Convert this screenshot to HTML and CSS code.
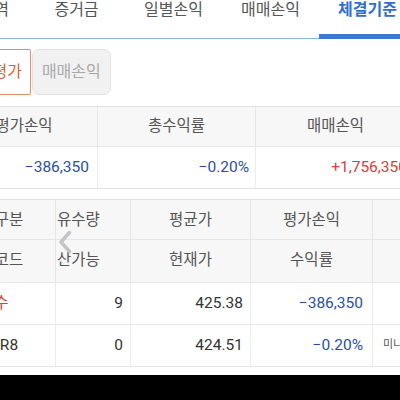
FILE: index.html
```html
<!DOCTYPE html>
<html lang="ko">
<head>
	<meta charset="UTF-8">
	<title>체결기준</title>
	<link rel="stylesheet" href="styles.css">
</head>
<body>
	<div class="tabs">
		<div class="tab">거래내역</div>
		<div class="tab">증거금</div>
		<div class="tab">일별손익</div>
		<div class="tab">매매손익</div>
		<div class="tab active">체결기준</div>
	</div>

	<div class="toggle">
		<div class="btn on">잔고평가</div>
		<div class="btn">매매손익</div>
	</div>

	<div class="sum">
		<div class="th">평가손익</div>
		<div class="th">총수익률</div>
		<div class="th">매매손익</div>
		<div class="td blue">&minus;386,350</div>
		<div class="td blue">&minus;0.20%</div>
		<div class="td red">+1,756,350</div>
	</div>

	<div class="detail">
		<div class="th">구분</div>
		<div class="th left">유수량</div>
		<div class="th">평균가</div>
		<div class="th">평가손익</div>
		<div class="th"></div>

		<div class="th">코드</div>
		<div class="th left">산가능</div>
		<div class="th">현재가</div>
		<div class="th">수익률</div>
		<div class="th"></div>

		<div class="td first red">매수</div>
		<div class="td">9</div>
		<div class="td">425.38</div>
		<div class="td blue">&minus;386,350</div>
		<div class="td"></div>

		<div class="td first">AKR8</div>
		<div class="td">0</div>
		<div class="td">424.51</div>
		<div class="td blue">&minus;0.20%</div>
		<div class="td small">미니</div>

		<svg class="chev" width="14" height="24" viewBox="0 0 14 24">
			<polyline points="11.5,2.5 3,12 11.5,21.5" fill="none" stroke="#c4c4c4" stroke-width="3.5" stroke-linecap="round" stroke-linejoin="round"/>
		</svg>
	</div>

	<div class="navbar"></div>
</body>
</html>
```

FILE: styles.css
```css
* {
	box-sizing: border-box;
}
html, body {
	margin: 0;
	padding: 0;
}
body {
	width: 400px;
	height: 400px;
	overflow: hidden;
	background: #fff;
	font-family: "Roboto", "Noto Sans CJK KR", sans-serif;
	color: #333;
}

/* tabs */
.tabs {
	display: flex;
	align-items: flex-start;
	margin-left: -69px;
	height: 39px;
	border-bottom: 1px solid #8fb4e2;
}
.tab {
	flex: 0 0 97px;
	height: 38px;
	text-align: center;
	font-size: 16px;
	line-height: 20px;
	color: #555;
	white-space: nowrap;
}
.tab.active {
	height: 39px;
	color: #2f6fcc;
	font-weight: bold;
	border-bottom: 5px solid #3b78d1;
}

/* toggle */
.toggle {
	display: flex;
	gap: 1px;
	margin: 10px 0 0 -46px;
	height: 46px;
}
.btn {
	padding: 0 9px;
	font-size: 16px;
	line-height: 44px;
	border: 1px solid #e2e2e2;
	border-radius: 7px;
	background: #f1f1f1;
	color: #a9a9a9;
}
.btn.on {
	padding: 0 8px;
	border-color: #e28c6c;
	border-radius: 2px;
	background: #fff;
	color: #d5633a;
}

/* summary */
.sum {
	display: grid;
	grid-template-columns: 147px 158px 160px;
	grid-template-rows: 40px 41px;
	margin: 11px 0 0 -49px;
	border-top: 1px solid #e0e0e0;
	border-bottom: 1px solid #e3e3e3;
	font-size: 15.5px;
}
.th {
	background: #f7f7f7;
	border-right: 1px solid #e6e6e6;
	border-bottom: 1px solid #e6e6e6;
	color: #555;
	text-align: center;
	line-height: 38px;
	white-space: nowrap;
	overflow: hidden;
}
.td {
	border-right: 1px solid #ececec;
	text-align: right;
	padding-right: 8px;
	line-height: 40px;
	white-space: nowrap;
	overflow: hidden;
}
.sum .td:nth-child(5) {
	padding-right: 6px;
}
.blue {
	color: #2a4f9f;
}
.red {
	color: #d6403a;
}

/* detail */
.detail {
	position: relative;
	display: grid;
	grid-template-columns: 93px 75px 120px 122px 100px;
	grid-template-rows: 40px 43px 42px 42px;
	margin: 10px 0 0 -37px;
	border-top: 1px solid #e0e0e0;
	font-size: 15.5px;
}
.detail .th {
	line-height: 40px;
}
.detail .th.left {
	text-align: left;
	padding-left: 1px;
}
.detail .td {
	border-bottom: 1px solid #e6e6e6;
	padding-right: 7px;
}
.detail .td:nth-child(5n+4) {
	padding-right: 9px;
}
.detail .td.first {
	text-align: left;
	padding-left: 17px;
}
.detail .td.small {
	text-align: left;
	padding-left: 10px;
	font-size: 11px;
	color: #555;
}
.chev {
	position: absolute;
	left: 95px;
	top: 30px;
}

.navbar {
	margin-top: 8px;
	height: 30px;
	background: #000;
}
```
